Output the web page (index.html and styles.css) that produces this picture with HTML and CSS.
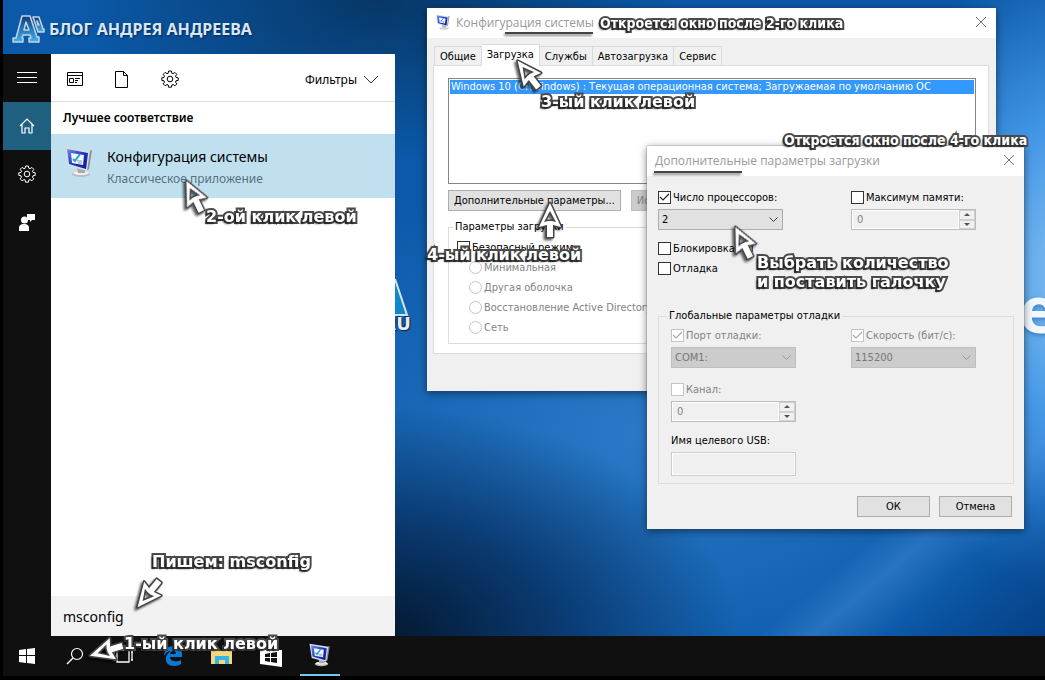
FILE: index.html
```html
<!DOCTYPE html>
<html lang="ru">
<head>
  <meta charset="UTF-8">
  <title>Конфигурация системы</title>
  <link rel="stylesheet" href="styles.css">
</head>
<body>

<svg class="defs" aria-hidden="true">
  <defs>
    <linearGradient id="screenFill" x1="0" y1="0" x2="1" y2="1">
      <stop offset="0" stop-color="#6f8ff0"/>
      <stop offset="0.5" stop-color="#1c35c8"/>
      <stop offset="1" stop-color="#0a1a8c"/>
    </linearGradient>
    <linearGradient id="letterFill" x1="0" y1="0" x2="0" y2="1">
      <stop offset="0" stop-color="#0d3c78"/>
      <stop offset="1" stop-color="#3fb4ea"/>
    </linearGradient>
  </defs>
  <symbol id="icon-monitor" viewBox="0 0 32 32">
    <ellipse cx="18" cy="28" rx="9" ry="3" fill="#b9b9bd"/>
    <ellipse cx="18" cy="27" rx="8" ry="2" fill="#efefef"/>
    <path d="M14 22l8 1v4h-7z" fill="#a9a9ae"/>
    <path d="M26 5l3-1-3 19-3 2z" fill="#8d8d94"/>
    <path d="M2 1l25 4-3 20L5 20z" fill="#dcdce0"/>
    <path d="M4 3l21 4-2 16L6 18z" fill="url(#screenFill)"/>
    <path d="M8 7l13 2-1 10-11-2z" fill="#f5f8ff"/>
    <path d="M10 13l2 2 5-7" fill="none" stroke="#2a9be0" stroke-width="2"/>
    <path d="M14 15h5M15 17h4" stroke="#8a93b5"/>
  </symbol>
  <symbol id="icon-gear" viewBox="0 0 18 18">
    <path d="M7.6 1h2.8l.4 2.2 1.3.5 1.8-1.3 1.9 1.9-1.3 1.9.5 1.2 2.2.4v2.6l-2.2.4-.5 1.3 1.3 1.8-1.9 1.9-1.8-1.3-1.3.5-.4 2.2H7.6l-.4-2.2-1.2-.5-1.9 1.3-1.9-1.9 1.3-1.8-.5-1.3L.8 10.4V7.8L3 7.4l.5-1.2-1.3-1.9 1.9-1.9L6 3.700l1.200-.5z" fill="none" stroke="currentColor"/>
    <circle cx="9" cy="9" r="2.800" fill="none" stroke="currentColor"/>
  </symbol>
  <symbol id="icon-close" viewBox="0 0 12 12">
    <path d="M1 1l10 10M11 1L1 11" stroke="currentColor"/>
  </symbol>
</svg>

<main class="desktop">
  <div class="brand">
    <svg width="34" height="30" viewBox="0 0 34 30">
      <g fill="url(#letterFill)" stroke="#c4d4e6" stroke-width="1.500" stroke-linejoin="round">
        <path fill-rule="evenodd" d="M10 2h8l7 21h2v5H17v-4h2l-1-3h-7l-1 3h1v4H1v-4h3zM14 8l-2 8h5z"/>
        <path fill-rule="evenodd" d="M21 3h6l4 12h1v3h-6l-5-15zM25 7l1 4h1z"/>
      </g>
    </svg>
    <span>БЛОГ АНДРЕЯ АНДРЕЕВА</span>
  </div>

  <div class="wallpaper-logo">
    <svg width="40" height="38" viewBox="0 0 40 38">
      <path d="M24 0l12 36H2z" fill="#1186c8" stroke="#d6e4f0" stroke-width="2"/>
    </svg>
    <span>.RU</span>
  </div>
  <div class="wallpaper-word">e</div>

  <section class="start">
    <nav class="rail">
      <button class="rail-item" aria-label="Меню">
        <svg width="20" height="12" viewBox="0 0 20 12"><path d="M0 0.500h20M0 5.500h20M0 10.500h20" stroke="#fff"/></svg>
      </button>
      <button class="rail-item current" aria-label="Домой">
        <svg width="16" height="16" viewBox="0 0 16 16"><path d="M1 8l7-7 7 7M3 6v9h3v-5h4v5h3V6" fill="none" stroke="#fff" stroke-width="1.200"/></svg>
      </button>
      <button class="rail-item" aria-label="Параметры">
        <svg width="18" height="18"><use href="#icon-gear"/></svg>
      </button>
      <button class="rail-item" aria-label="Отзывы">
        <svg width="16" height="17" viewBox="0 0 16 17"><path d="M8 0h8v6h-3l-2 2V6H8z" fill="#fff"/><circle cx="5.500" cy="6" r="3.500" fill="#fff"/><path d="M0 17v-3c0-3 2-4 5-4s5 1 5 4v3z" fill="#fff"/></svg>
      </button>
    </nav>
    <div class="results">
      <div class="filters">
        <button aria-label="Приложения">
          <svg width="16" height="14" viewBox="0 0 16 14"><path d="M0.500 0.500h15v13h-15zM0 3.500h16" fill="none" stroke="#000"/><path d="M2.500 6.500h4v4h-4zM8 6.500h5M8 8.500h3M8 10.500h2" fill="none" stroke="#000"/></svg>
        </button>
        <button aria-label="Документы">
          <svg width="14" height="17" viewBox="0 0 14 17"><path d="M0.500 0.500h8l4 4v12h-12zM8.500 0.500v4h4" fill="none" stroke="#000"/></svg>
        </button>
        <button aria-label="Параметры">
          <svg width="18" height="18"><use href="#icon-gear"/></svg>
        </button>
        <button class="filter-menu">Фильтры
          <svg width="16" height="9" viewBox="0 0 16 9"><path d="M1 1l7 7 7-7" fill="none" stroke="#333"/></svg>
        </button>
      </div>
      <h2>Лучшее соответствие</h2>
      <a class="best-match" href="#">
        <svg width="32" height="32"><use href="#icon-monitor"/></svg>
        <span>
          <strong>Конфигурация системы</strong>
          <small>Классическое приложение</small>
        </span>
      </a>
      <input class="search" type="text" value="msconfig" aria-label="Поиск">
    </div>
  </section>

  <section class="window config">
    <header class="titlebar">
      <svg width="16" height="16"><use href="#icon-monitor"/></svg>
      <h1>Конфигурация системы</h1>
      <button class="close" aria-label="Закрыть"><svg width="12" height="12"><use href="#icon-close"/></svg></button>
    </header>
    <div class="tabs">
      <button>Общие</button>
      <button class="active">Загрузка</button>
      <button>Службы</button>
      <button>Автозагрузка</button>
      <button>Сервис</button>
    </div>
    <div class="tab-panel">
      <ul class="boot-list">
        <li>Windows 10 (C:\Windows) : Текущая операционная система; Загружаемая по умолчанию ОС</li>
      </ul>
      <div class="actions">
        <button class="btn">Дополнительные параметры...</button>
        <button class="btn" disabled>Использовать по умолчанию</button>
      </div>
      <fieldset class="boot-options">
        <legend>Параметры загрузки</legend>
        <label class="check"><input type="checkbox">Безопасный режим</label>
        <div class="radios">
          <label><input type="radio" name="boot" disabled>Минимальная</label>
          <label><input type="radio" name="boot" disabled>Другая оболочка</label>
          <label><input type="radio" name="boot" disabled>Восстановление Active Directory</label>
          <label><input type="radio" name="boot" disabled>Сеть</label>
        </div>
      </fieldset>
    </div>
  </section>

  <section class="window advanced">
    <header class="titlebar">
      <h1>Дополнительные параметры загрузки</h1>
      <button class="close" aria-label="Закрыть"><svg width="12" height="12"><use href="#icon-close"/></svg></button>
    </header>
    <div class="advanced-body">
      <div class="columns limits">
        <div class="field">
          <label class="check"><input type="checkbox" checked>Число процессоров:</label>
          <select aria-label="Число процессоров"><option>2</option></select>
        </div>
        <div class="field">
          <label class="check"><input type="checkbox">Максимум памяти:</label>
          <div class="spin">
            <input type="text" value="0" aria-label="Максимум памяти" disabled>
            <div><button aria-label="Больше"></button><button class="down" aria-label="Меньше"></button></div>
          </div>
        </div>
      </div>
      <div class="flags">
        <label class="check"><input type="checkbox">Блокировка PCI</label>
        <label class="check"><input type="checkbox">Отладка</label>
      </div>
      <fieldset class="debug">
        <legend>Глобальные параметры отладки</legend>
        <div class="columns">
          <div class="field">
            <label class="check off"><input type="checkbox" checked disabled>Порт отладки:</label>
            <select aria-label="Порт отладки" disabled><option>COM1:</option></select>
          </div>
          <div class="field">
            <label class="check off"><input type="checkbox" checked disabled>Скорость (бит/с):</label>
            <select aria-label="Скорость" disabled><option>115200</option></select>
          </div>
          <div class="field">
            <label class="check off"><input type="checkbox" disabled>Канал:</label>
            <div class="spin">
              <input type="text" value="0" aria-label="Канал" disabled>
              <div><button aria-label="Больше"></button><button class="down" aria-label="Меньше"></button></div>
            </div>
          </div>
        </div>
        <div class="field usb">
          <label for="usbName">Имя целевого USB:</label>
          <input type="text" id="usbName" disabled>
        </div>
      </fieldset>
      <div class="dialog-buttons">
        <button class="btn">ОК</button>
        <button class="btn">Отмена</button>
      </div>
    </div>
  </section>
</main>

<footer class="taskbar">
  <button aria-label="Пуск">
    <svg width="16" height="16" viewBox="0 0 16 16"><path d="M0 2l7-1v6H0zM8 1l8-1v7H8zM0 8h7v7l-7-1zM8 8h8v8l-8-1z" fill="#fff"/></svg>
  </button>
  <button aria-label="Поиск">
    <svg width="18" height="18" viewBox="0 0 18 18"><circle cx="11" cy="7" r="5.500" fill="none" stroke="#fff" stroke-width="1.200"/><path d="M7 11l-6 6" stroke="#fff" stroke-width="1.500"/></svg>
  </button>
  <button aria-label="Представление задач">
    <svg width="20" height="14" viewBox="0 0 20 14"><path d="M4 1h12v12H4zM2 3H0M1 3v8M2 11H0M18 3h2M19 3v8M18 11h2" fill="none" stroke="#fff" stroke-width="1.300"/></svg>
  </button>
  <div class="apps">
    <button aria-label="Edge">
      <svg width="20" height="20" viewBox="0 0 20 20"><path d="M1 9c1-5 4-9 9-9 6 0 9 4 9 9v2H7c0 4 6 6 11 3v4c-2 1-4 2-7 2-6 0-9-4-8-9 1-3 3-5 5-6-4 0-6 3-7 5zM7 8h6c0-4-5-4-6 0z" fill="#0a7ad9"/></svg>
    </button>
    <button aria-label="Проводник">
      <svg width="22" height="18" viewBox="0 0 22 18"><path d="M0 2h8l2 2h11v13H0z" fill="#f5d77e"/><path d="M0 2h8v2H0z" fill="#e2a92e"/><path d="M4 17V9h14v8h-4v-4H8v4z" fill="#35b5e5"/></svg>
    </button>
    <button aria-label="Магазин">
      <svg width="22" height="22" viewBox="0 0 22 22"><path d="M0 5h22v17l-22-3zM6 5V3c0-3 9-3 9 0v2h-1V3c0-2-7-2-7 0v2z" fill="#fff"/><path d="M5 9l5-1v4H5zM11 8l6-1v5h-6zM5 13h5v4l-5-1zM11 13h6v5l-6-1z" fill="#101010"/></svg>
    </button>
    <button class="running" aria-label="Конфигурация системы">
      <svg width="24" height="24"><use href="#icon-monitor"/></svg>
    </button>
  </div>
</footer>

<!-- Hints drawn over the windows -->
<svg class="marks" aria-hidden="true">
  <defs>
    <path id="arrow" fill-rule="evenodd" d="M0 1L11 25L3 23V35H-3V23L-11 25ZM0 9L6 20L2 19H-2L-6 20Z"/>
  </defs>
  <g class="pointers">
    <use href="#arrow" transform="translate(186 180) rotate(-26)"/>
    <use href="#arrow" transform="translate(517 60) rotate(-38)"/>
    <use href="#arrow" transform="translate(735 226) rotate(-26)"/>
    <use href="#arrow" transform="translate(550 202)"/>
    <use href="#arrow" transform="translate(137 608) rotate(219)"/>
    <use href="#arrow" transform="translate(89 656) rotate(253)"/>
  </g>
  <path class="underlines" d="M505 33h88M654 172h88"/>
</svg>
<p class="hint hint-type">Пишем: msconfig</p>
<p class="hint hint-first">1-ый клик левой</p>
<p class="hint hint-second">2-ой клик левой</p>
<p class="hint hint-third">3-ый клик левой</p>
<p class="hint hint-fourth">4-ый клик левой</p>
<p class="hint hint-choose">Выбрать количество<br>и поставить галочку</p>
<p class="hint narrow hint-window">Откроется окно после 2-го клика</p>
<p class="hint narrow hint-dialog">Откроется окно после 4-го клика</p>

</body>
</html>
```
FILE: styles.css
```css
* {
  box-sizing: border-box;
}

body {
  margin: 0;
  min-height: 100vh;
  display: flex;
  flex-direction: column;
  position: relative;
  overflow: hidden;
  background: #000;
  border-left: 3px solid #000;
  border-bottom: 4px solid #000;
  font-family: "DejaVu Sans Condensed", "DejaVu Sans", sans-serif;
  font-size: 11px;
  color: #000;
}

button, input, select {
  font: inherit;
  color: inherit;
}

button {
  padding: 0;
  border: 0;
  background: none;
}

h1, h2, p, ul {
  margin: 0;
  padding: 0;
}

.defs {
  position: absolute;
  width: 0;
  height: 0;
}

/* Desktop */
.desktop {
  flex: 1;
  display: flex;
  flex-direction: column;
  position: relative;
  overflow: hidden;
  background:
    linear-gradient(140deg, transparent 84%, rgba(80, 150, 225, 0.35) 87%, rgba(10, 80, 160, 0.2) 91%, rgba(0, 40, 100, 0.5) 100%),
    radial-gradient(ellipse 240px 320px at 104% 43%, #8cc4f4, rgba(70, 155, 235, 0.9) 50%, transparent),
    radial-gradient(ellipse 360px 230px at 36% 100%, #03182f, rgba(5, 40, 85, 0.7) 50%, transparent),
    radial-gradient(ellipse 300px 160px at 36% 0, #073767, transparent),
    radial-gradient(ellipse 420px 280px at 62% 68%, #2a7ac8, transparent),
    #0b59a8;
}

.brand {
  height: 54px;
  padding: 4px 0 0 9px;
  display: flex;
  align-items: center;
  gap: 3px;
  font-family: "Noto Sans", sans-serif;
  font-size: 16px;
  font-weight: bold;
  color: #d9e6f5;
  text-shadow: 1px 1px 2px #032a58;
}

.wallpaper-logo {
  position: absolute;
  left: 368px;
  top: 279px;
  display: flex;
  flex-direction: column;
  align-items: flex-end;
  font: bold 18px "DejaVu Sans", sans-serif;
  line-height: 14px;
  color: #e3ebf4;
  text-shadow: 1px 1px 1px #10243c, -1px -1px 1px #10243c;
}

.wallpaper-word {
  position: absolute;
  right: -12px;
  top: 269px;
  font: bold 64px/80px "Open Sans", sans-serif;
  color: #f2f8fe;
  text-shadow: 0 2px 4px rgba(20, 80, 150, 0.5);
}

/* Start menu */
.start {
  flex: 1;
  display: flex;
  position: relative;
  width: 392px;
  font-family: "Noto Sans", "Open Sans", sans-serif;
}

.rail {
  width: 48px;
  background: #101010;
  color: #fff;
}

.rail-item {
  display: flex;
  align-items: center;
  justify-content: center;
  width: 100%;
  height: 48px;
}

.rail-item.current {
  background: #1f5f80;
}

.results {
  flex: 1;
  display: flex;
  flex-direction: column;
  background: #fff;
}

.filters {
  display: flex;
  align-items: center;
  gap: 32px;
  height: 48px;
  padding: 3px 16px 0;
  border-bottom: 1px solid #dcdcdc;
}

.filters button {
  display: flex;
  align-items: center;
}

.filters .filter-menu {
  margin-left: auto;
  gap: 6px;
  font-size: 12px;
}

.results h2 {
  padding: 0 12px;
  font-size: 12px;
  line-height: 32px;
  font-weight: 600;
}

.best-match {
  display: flex;
  gap: 12px;
  height: 64px;
  padding: 12px;
  background: #c0e0ef;
  color: #000;
  text-decoration: none;
}

.best-match strong,
.best-match small {
  display: block;
  line-height: 22px;
  font-weight: normal;
}

.best-match strong {
  font-size: 14px;
}

.best-match small {
  font-size: 12px;
  color: #57707c;
}

.search {
  margin-top: auto;
  height: 40px;
  padding: 0 12px;
  border: 0;
  background: #f2f2f2;
  font-size: 14px;
}

/* Windows */
.window {
  position: absolute;
  background: #f0f0f0;
  box-shadow: 0 0 1px #456, 0 2px 8px rgba(0, 0, 0, 0.5);
}

.config {
  left: 424px;
  top: 8px;
  width: 569px;
  padding-bottom: 37px;
}

.advanced {
  left: 644px;
  top: 146px;
  width: 377px;
}

.titlebar {
  display: flex;
  align-items: center;
  gap: 5px;
  height: 30px;
  padding: 0 9px 2px 8px;
  background: #fff;
  color: #999;
}

.titlebar h1 {
  font: 12px "Open Sans", sans-serif;
}

.close {
  display: flex;
  margin-left: auto;
  color: #777;
}

.tabs {
  display: flex;
  align-items: flex-end;
  height: 27px;
  padding-left: 7px;
}

.tabs button {
  height: 19px;
  padding: 0 5px;
  border: 1px solid #d9d9d9;
  border-left-width: 0;
  border-bottom: 0;
}

.tabs button:first-child {
  border-left-width: 1px;
}

.tabs .active {
  height: 22px;
  margin-bottom: -1px;
  padding-bottom: 3px;
  background: #fff;
}

.tab-panel {
  margin: 0 7px 0 6px;
  padding: 12px 12px 9px 14px;
  background: #fff;
  border: 1px solid #dcdcdc;
}

.boot-list {
  height: 106px;
  padding: 1px;
  border: 1px solid #82878f;
  list-style: none;
}

.boot-list li {
  padding-left: 1px;
  line-height: 14px;
  white-space: nowrap;
  background: #3399ff;
  color: #fff;
}

.actions {
  display: flex;
  gap: 10px;
  margin-top: 6px;
}

.btn {
  height: 21px;
  padding: 0 5px;
  background: #e1e1e1;
  border: 1px solid #adadad;
  white-space: nowrap;
}

.btn:disabled {
  background: #ccc;
  border-color: #bfbfbf;
  color: #838383;
}

fieldset {
  margin: 0;
  border: 1px solid #dcdcdc;
}

legend {
  padding: 0 2px;
  line-height: 14px;
}

.boot-options {
  margin-top: 9px;
  padding: 6px 8px;
}

.boot-options legend,
.debug legend {
  margin-left: -4px;
}

.check,
.radios label {
  display: flex;
  align-items: center;
  gap: 2px;
  white-space: nowrap;
}

.check {
  height: 15px;
}

.off,
.radios {
  color: #838383;
}

.radios {
  padding: 2px 0 0 12px;
}

.radios label {
  height: 20px;
}

input[type="checkbox"],
input[type="radio"] {
  appearance: none;
  flex: none;
  width: 13px;
  height: 13px;
  margin: 0;
  border: 1px solid #333;
  background: #fff center / 11px no-repeat;
}

input[type="radio"] {
  border-radius: 50%;
}

input[type="checkbox"]:checked {
  background-image: url("data:image/svg+xml,%3Csvg xmlns='http://www.w3.org/2000/svg' viewBox='0 0 11 11'%3E%3Cpath d='M1 5l3 3 6-6' fill='none' stroke='%23222' stroke-width='1.2'/%3E%3C/svg%3E");
}

input[type="checkbox"]:disabled,
input[type="radio"]:disabled {
  border-color: #c4c4c4;
}

input[type="checkbox"]:disabled:checked {
  background-image: url("data:image/svg+xml,%3Csvg xmlns='http://www.w3.org/2000/svg' viewBox='0 0 11 11'%3E%3Cpath d='M1 5l3 3 6-6' fill='none' stroke='%23aaa' stroke-width='1.2'/%3E%3C/svg%3E");
}

/* Advanced boot options */
.advanced-body {
  padding: 14px 10px 12px 11px;
}

.columns {
  display: grid;
  grid-template-columns: 125px 125px;
  gap: 14px 55px;
}

.limits {
  column-gap: 68px;
}

.field {
  display: flex;
  flex-direction: column;
  gap: 4px;
}

select {
  appearance: none;
  height: 21px;
  padding: 0 3px;
  border: 1px solid #adadad;
  border-radius: 0;
  background: #e1e1e1 url("data:image/svg+xml,%3Csvg xmlns='http://www.w3.org/2000/svg' viewBox='0 0 9 6'%3E%3Cpath d='M0.5 0.5l4 4 4-4' fill='none' stroke='%23444'/%3E%3C/svg%3E") right 4px center / 9px no-repeat;
}

select:disabled {
  opacity: 1;
  border-color: #bfbfbf;
  background-color: #ccc;
  background-image: url("data:image/svg+xml,%3Csvg xmlns='http://www.w3.org/2000/svg' viewBox='0 0 9 6'%3E%3Cpath d='M0.5 0.5l4 4 4-4' fill='none' stroke='%23999'/%3E%3C/svg%3E");
  color: #777;
}

.spin,
.usb input {
  height: 21px;
  border: 1px solid #bcbcbc;
  background: #f0f0f0;
}

.spin {
  display: flex;
}

.spin input {
  flex: 1;
  min-width: 0;
  padding: 0 4px;
  border: 1px solid #fff;
  background: none;
  color: #838383;
}

.spin div {
  display: flex;
  flex-direction: column;
  width: 16px;
}

.spin button {
  flex: 1;
  display: flex;
  align-items: center;
  justify-content: center;
  border: 1px solid #d0d0d0;
}

.spin button::before {
  content: "";
  border: 3px solid transparent;
  border-top-width: 0;
  border-bottom-color: #555;
}

.spin .down::before {
  border-top: 3px solid #555;
  border-bottom-width: 0;
}

.flags {
  display: grid;
  gap: 5px;
  margin-top: 11px;
}

.debug {
  margin-top: 33px;
  padding: 5px 12px 7px;
}

.usb {
  width: 125px;
  margin-top: 12px;
}

.usb label {
  line-height: 14px;
}

.usb input {
  height: 24px;
  border-color: #ccc;
  box-shadow: inset 0 0 0 1px #fff;
}

.dialog-buttons {
  display: flex;
  justify-content: flex-end;
  gap: 9px;
  margin-top: 12px;
  padding-right: 2px;
}

.dialog-buttons .btn {
  width: 73px;
}

/* Taskbar */
.taskbar {
  display: flex;
  height: 40px;
  background: #101010;
}

.taskbar button {
  display: flex;
  align-items: center;
  justify-content: center;
  width: 48px;
  height: 40px;
}

.apps {
  display: flex;
  gap: 1px;
  padding-left: 2px;
}

.apps .running {
  width: 40px;
  margin-left: 4px;
  border-bottom: 2px solid #76c8f0;
}

/* Hints */
.marks {
  position: absolute;
  left: -3px;
  top: 0;
  width: 100%;
  height: 100%;
}

.pointers {
  fill: #fff;
  stroke: #444;
  stroke-width: 3px;
  stroke-linejoin: round;
  paint-order: stroke;
  filter: drop-shadow(-2px 2px 1px rgba(0, 0, 0, 0.6));
}

.underlines {
  stroke: #444;
  stroke-width: 2px;
  filter: drop-shadow(-1px 2px 1px rgba(0, 0, 0, 0.5));
}

.hint {
  position: absolute;
  font: bold 16px/19px "DejaVu Sans", sans-serif;
  white-space: nowrap;
  color: #fff;
  -webkit-text-stroke: 4px #4a4a4a;
  paint-order: stroke fill;
  text-shadow: -2px 2px 2px rgba(0, 0, 0, 0.6);
}

.hint.narrow {
  font-family: "DejaVu Sans Condensed", "DejaVu Sans", sans-serif;
  font-size: 14px;
}

.hint-type { left: 149px; top: 552px; }
.hint-first { left: 121px; top: 634px; }
.hint-second { left: 203px; top: 207px; }
.hint-third { left: 538px; top: 92px; }
.hint-fourth { left: 424px; top: 245px; }
.hint-choose { left: 754px; top: 253px; }
.hint-window { left: 597px; top: 14px; }
.hint-dialog { left: 781px; top: 131px; }
```
